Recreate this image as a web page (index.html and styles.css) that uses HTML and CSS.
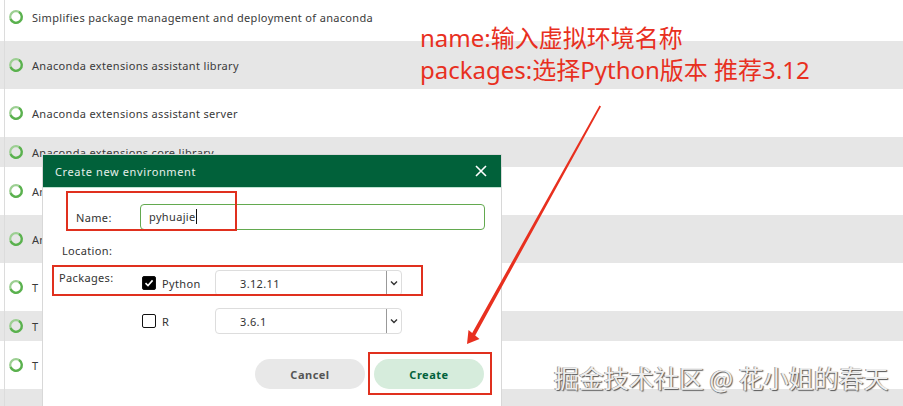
FILE: index.html
```html
<!DOCTYPE html>
<html lang="en">
<head>
    <meta charset="UTF-8">
    <meta name="viewport" content="width=device-width, initial-scale=1.0">
    <title>Create new environment</title>
    <link rel="stylesheet" href="styles.css">
</head>
<body>

    <div class="list">
        <div class="row"><svg class="spinner" viewBox="0 0 16 16"><circle class="ring-soft" cx="8" cy="8" r="5.8"/><path class="ring" d="M11 3A5.8 5.8 0 1 1 2.6 10"/></svg><span>Simplifies package management and deployment of anaconda</span></div>
        <div class="row alt"><svg class="spinner" viewBox="0 0 16 16"><circle class="ring-soft" cx="8" cy="8" r="5.8"/><path class="ring" d="M11 3A5.8 5.8 0 1 1 2.6 10"/></svg><span>Anaconda extensions assistant library</span></div>
        <div class="row"><svg class="spinner" viewBox="0 0 16 16"><circle class="ring-soft" cx="8" cy="8" r="5.8"/><path class="ring" d="M11 3A5.8 5.8 0 1 1 2.6 10"/></svg><span>Anaconda extensions assistant server</span></div>
        <div class="row alt short"><svg class="spinner" viewBox="0 0 16 16"><circle class="ring-soft" cx="8" cy="8" r="5.8"/><path class="ring" d="M11 3A5.8 5.8 0 1 1 2.6 10"/></svg><span>Anaconda extensions core library</span></div>
        <div class="row"><svg class="spinner" viewBox="0 0 16 16"><circle class="ring-soft" cx="8" cy="8" r="5.8"/><path class="ring" d="M11 3A5.8 5.8 0 1 1 2.6 10"/></svg><span>An</span></div>
        <div class="row alt"><svg class="spinner" viewBox="0 0 16 16"><circle class="ring-soft" cx="8" cy="8" r="5.8"/><path class="ring" d="M11 3A5.8 5.8 0 1 1 2.6 10"/></svg><span>An</span></div>
        <div class="row"><svg class="spinner" viewBox="0 0 16 16"><circle class="ring-soft" cx="8" cy="8" r="5.8"/><path class="ring" d="M11 3A5.8 5.8 0 1 1 2.6 10"/></svg><span>T</span></div>
        <div class="row alt short"><svg class="spinner" viewBox="0 0 16 16"><circle class="ring-soft" cx="8" cy="8" r="5.8"/><path class="ring" d="M11 3A5.8 5.8 0 1 1 2.6 10"/></svg><span>T</span></div>
        <div class="row"><svg class="spinner" viewBox="0 0 16 16"><circle class="ring-soft" cx="8" cy="8" r="5.8"/><path class="ring" d="M11 3A5.8 5.8 0 1 1 2.6 10"/></svg><span>T</span></div>
        <div class="row alt end"></div>
    </div>

    <div class="dialog">
        <div class="dialog-head">
            <span>Create new environment</span>
            <svg class="close" viewBox="0 0 12 12"><path d="M1 1L11 11M11 1L1 11"/></svg>
        </div>
        <div class="dialog-body">
            <div class="field name-field">
                <label>Name:</label>
                <div class="text-input">pyhuajie<i class="caret"></i></div>
            </div>
            <div class="field location-field">
                <label>Location:</label>
            </div>
            <div class="packages">
                <label>Packages:</label>
                <div class="pkg-rows">
                    <div class="pkg">
                        <span class="check on"><svg viewBox="0 0 12 12"><path d="M2.5 6.2L5 8.6L9.6 3.4"/></svg></span>
                        <span class="pkg-name">Python</span>
                        <div class="select"><span>3.12.11</span><b><svg viewBox="0 0 8 6"><path d="M1 1.5L4 4.5L7 1.5"/></svg></b></div>
                    </div>
                    <div class="pkg">
                        <span class="check"></span>
                        <span class="pkg-name">R</span>
                        <div class="select"><span>3.6.1</span><b><svg viewBox="0 0 8 6"><path d="M1 1.5L4 4.5L7 1.5"/></svg></b></div>
                    </div>
                </div>
            </div>
            <div class="actions">
                <button class="btn cancel">Cancel</button>
                <button class="btn create">Create</button>
            </div>
        </div>
    </div>

    <!-- screenshot annotations on top of the app -->
    <div class="note">name:输入虚拟环境名称<br>packages:选择Python版本 推荐3.12</div>
    <div class="mark mark-name"></div>
    <div class="mark mark-packages"></div>
    <div class="mark mark-create"></div>
    <svg class="arrow" viewBox="0 0 903 406"><polygon points="599.5,105.5 601,106.5 475.2,335.4 479.5,339 467,344 468.5,330 472.2,333"/></svg>
    <div class="watermark">掘金技术社区 @ 花小姐的春天</div>

</body>
</html>
```

FILE: styles.css
```css
html, body {
    margin: 0;
    height: 100%;
    overflow: hidden;
}
body {
    position: relative;
    background: #fff;
    color: #333;
    font-family: "Noto Sans", "Open Sans", sans-serif;
    font-size: 11px;
}
.list {
    margin-top: -7px;
}
.row {
    height: 48px;
    display: flex;
    align-items: center;
    padding-left: 8px;
    box-sizing: border-box;
    letter-spacing: 0.33px;
    color: #3a3a3a;
    background-image: linear-gradient(#dcdcdc, #dcdcdc);
    background-size: 1px 100%;
    background-position: 4px 0;
    background-repeat: no-repeat;
}
.row.alt {
    background-color: #e6e6e6;
}
.row.short {
    height: 30px;
}
.row.end {
    height: 17px;
}
.spinner {
    width: 16px;
    height: 16px;
    margin-right: 8px;
    flex: none;
}
.ring-soft {
    fill: none;
    stroke: #9ccf92;
    stroke-width: 2.2;
}
.ring {
    fill: none;
    stroke: #5ab14e;
    stroke-width: 2.2;
}

/* dialog */
.dialog {
    position: absolute;
    left: 43px;
    top: 155px;
    bottom: 0;
    width: 458px;
    background: #fff;
    box-shadow: 0 0 0 1px #d8d8d8;
}
.dialog-head {
    height: 32px;
    background: #01613a;
    border-bottom: 1px solid #bfe3d2;
    color: #e6f0ea;
    display: flex;
    align-items: center;
    justify-content: space-between;
    padding: 0 14px 0 12px;
    letter-spacing: 0.62px;
}
.close {
    width: 12px;
    height: 12px;
}
.close path {
    stroke: #fff;
    stroke-width: 1.6;
    fill: none;
}
.dialog-body {
    padding: 16px 16px 0 0;
    letter-spacing: 0.35px;
}
.field {
    display: flex;
    align-items: center;
}
.name-field {
    height: 26px;
}
.name-field label {
    width: 97px;
    padding-left: 33px;
    box-sizing: border-box;
}
.text-input {
    flex: 1;
    height: 26px;
    box-sizing: border-box;
    border: 1px solid #63a94f;
    border-radius: 4px;
    padding-left: 8px;
    line-height: 24px;
}
.caret {
    display: inline-block;
    width: 1px;
    height: 15px;
    background: #111;
    vertical-align: -3px;
}
.location-field {
    margin-top: 12px;
    height: 17px;
    padding-left: 19px;
}
.packages {
    display: flex;
    margin-top: 11px;
}
.packages > label {
    width: 83px;
    padding-left: 16px;
    box-sizing: border-box;
}
.pkg-rows {
    display: flex;
    flex-direction: column;
    gap: 12px;
}
.pkg {
    display: flex;
    align-items: center;
    height: 26px;
}
.check {
    width: 12px;
    height: 12px;
    border: 1px solid #111;
    border-radius: 2px;
    margin-left: 16px;
    margin-right: 6px;
    display: flex;
}
.check.on {
    background: #000;
}
.check svg path {
    fill: none;
    stroke: #fff;
    stroke-width: 1.6;
}
.pkg-name {
    width: 53px;
}
.select {
    width: 187px;
    height: 26px;
    box-sizing: border-box;
    border: 1px solid #ddd;
    border-radius: 4px;
    display: flex;
    align-items: center;
    justify-content: space-between;
    padding-left: 24px;
}
.select b {
    width: 14px;
    height: 24px;
    border-left: 1px solid #999;
    display: flex;
    align-items: center;
    justify-content: center;
}
.select svg {
    width: 8px;
    height: 6px;
}
.select path {
    fill: none;
    stroke: #333;
    stroke-width: 1.4;
}
.actions {
    display: flex;
    justify-content: flex-end;
    gap: 9px;
    margin-top: 25px;
    margin-right: 1px;
}
.btn {
    width: 110px;
    height: 30px;
    border: 0;
    border-radius: 15px;
    font-family: inherit;
    font-size: 11px;
    font-weight: 700;
    letter-spacing: 0.5px;
    padding: 0;
}
.cancel {
    background: #e8e8e8;
    color: #555;
}
.create {
    background: #d6ecdc;
    color: #01613a;
}

/* annotations */
.note {
    position: absolute;
    left: 420px;
    top: 22px;
    color: #e8301f;
    font-family: "Noto Sans", "Noto Sans CJK SC", sans-serif;
    font-size: 24px;
    line-height: 32px;
    white-space: nowrap;
}
.mark {
    position: absolute;
    box-sizing: border-box;
    border: 2px solid #e0301e;
}
.mark-name {
    left: 66px;
    top: 191px;
    width: 171px;
    height: 40px;
}
.mark-packages {
    left: 52px;
    top: 265px;
    width: 371px;
    height: 31px;
}
.mark-create {
    left: 368px;
    top: 352px;
    width: 124px;
    height: 43px;
}
.arrow {
    position: absolute;
    left: 0;
    top: 0;
    width: 903px;
    height: 406px;
}
.arrow polygon {
    fill: #e8301f;
}
.watermark {
    position: absolute;
    left: 554px;
    top: 361px;
    color: #eee;
    font-family: "Noto Sans CJK SC", sans-serif;
    font-size: 25px;
    line-height: 32px;
    white-space: nowrap;
    text-shadow: 1px 1px 1px #555, -1px 0 0 #999;
}
```
